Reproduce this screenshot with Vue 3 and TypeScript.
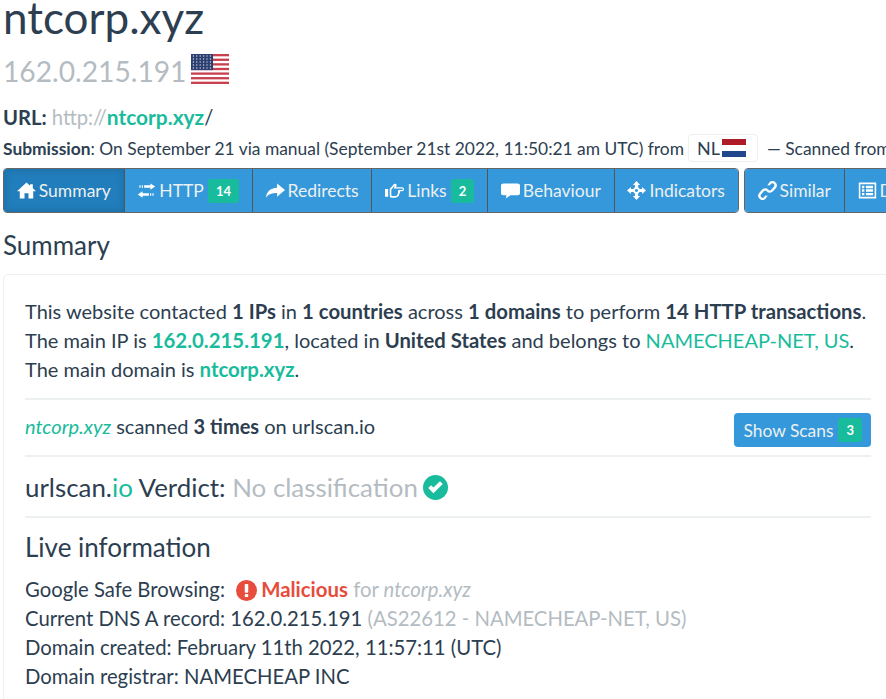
<template>
  <div class="page">
    <h1 class="title">ntcorp.xyz</h1>
    <h2 class="ip">
      <span>162.0.215.191</span>
      <svg class="us-flag" viewBox="0 0 38 29" width="38" height="30" preserveAspectRatio="none">
        <rect width="38" height="29" fill="#fff" />
        <rect v-for="n in 7" :key="n" x="0" :y="(n - 1) * 4.46" width="38" height="2.23" fill="#c8404f" />
        <rect width="22" height="15.6" fill="#2d3f70" />
        <g fill="#cfd6e8">
          <template v-for="r in 5" :key="r">
            <circle v-for="c in 6" :key="c" :cx="c * 3.4 - 1" :cy="r * 2.9 - 1" r="0.7" />
          </template>
        </g>
      </svg>
    </h2>
    <div class="url"><b>URL:</b> <span class="muted">http://</span><a class="domain">ntcorp.xyz</a><b class="slash">/</b></div>
    <div class="submission">
      <span><b>Submission</b>: On September 21 via manual (September 21st 2022, 11:50:21 am UTC) from</span>
      <span class="country">NL
        <svg viewBox="0 0 24 18" width="24" height="18">
          <rect width="24" height="6" fill="#ae1c28" />
          <rect y="6" width="24" height="6" fill="#fff" />
          <rect y="12" width="24" height="6" fill="#21468b" />
        </svg>
      </span>
      <span class="dash">— Scanned from</span>
    </div>

    <div class="tabs">
      <div class="tab-group">
        <div v-for="tab in mainTabs" :key="tab.label" class="tab" :class="{ active: tab.active }">
          <svg class="icon" viewBox="0 0 24 24" width="19" height="19" fill="#fff" fill-rule="evenodd"><path :d="tab.icon" /></svg>
          <span>{{ tab.label }}</span>
          <span v-if="tab.badge" class="badge">{{ tab.badge }}</span>
        </div>
      </div>
      <div class="tab-group">
        <div v-for="tab in otherTabs" :key="tab.label" class="tab">
          <svg class="icon" viewBox="0 0 24 24" width="19" height="19" fill="#fff" fill-rule="evenodd"><path :d="tab.icon" /></svg>
          <span>{{ tab.label }}</span>
        </div>
      </div>
    </div>

    <h3 class="section-title">Summary</h3>

    <div class="panel">
      <p class="intro">
        This website contacted <b>1 IPs</b> in <b>1 countries</b> across <b>1 domains</b> to perform <b>14 HTTP transactions</b>.<br />
        The main IP is <a class="domain">162.0.215.191</a>, located in <b>United States</b> and belongs to <a class="link">NAMECHEAP-NET, US</a>.<br />
        The main domain is <a class="domain">ntcorp.xyz</a>.
      </p>
      <div class="scan-row">
        <span class="scan-text"><a class="link"><i>ntcorp.xyz</i></a> scanned <b>3 times</b> on urlscan.io</span>
        <button class="scan-btn">Show Scans <span class="badge">3</span></button>
      </div>
      <div class="verdict">
        <span>urlscan.<span class="green">io</span> Verdict: <span class="muted">No classification</span></span>
        <svg viewBox="0 0 24 24" width="25" height="25"><circle cx="12" cy="12" r="12" fill="#18bc9c" /><path d="M5 12.500l5 5 9-8.800-2.700-2.700-6.300 6.100-2.300-2.300z" fill="#fff" /></svg>
      </div>
      <h3 class="live-title">Live information</h3>
      <div class="live">
        <div>
          Google Safe Browsing:
          <svg class="alert" viewBox="0 0 24 24" width="21" height="21"><circle cx="12" cy="12" r="12" fill="#e74c3c" /><rect x="10" y="4.500" width="4" height="10" rx="1" fill="#fff" /><rect x="10" y="16" width="4" height="3.500" rx="1" fill="#fff" /></svg>
          <b class="danger">Malicious</b> <span class="muted">for <i>ntcorp.xyz</i></span>
        </div>
        <div>Current DNS A record: 162.0.215.191 <span class="muted">(AS22612 - NAMECHEAP-NET, US)</span></div>
        <div>Domain created: February 11th 2022, 11:57:11 (UTC)</div>
        <div>Domain registrar: NAMECHEAP INC</div>
      </div>
    </div>
  </div>
</template>

<script setup lang="ts">
interface Tab {
  label: string;
  icon: string;
  badge?: string;
  active?: boolean;
}

const mainTabs: Tab[] = [
  { label: "Summary", active: true, icon: "M12 2L0 13h3.500v9h6v-6.500h5V22h6v-9H24l-4-3.700V4h-3.500v2z" },
  { label: "HTTP", badge: "14", icon: "M17 3l6 4-6 4V8.500H9v-3h8zM3 5.500h1.500v3H3zM6 5.500h1.500v3H6zM7 13v2.500h8v3H7V21l-6-4zM16.500 15.500H18v3h-1.500zM19.500 15.500H21v3h-1.500z" },
  { label: "Redirects", icon: "M14 3l10 8.500-10 8.500v-5C8 15 3 16 0 21c.5-7 5-12 14-12.500z" },
  { label: "Links", badge: "2", icon: "M0 10h4v10H0zM6 10L11 4Q12 3 13.500 3.500L14.500 4Q15 6 14 8H21.500A2.500 2.500 0 0 1 21.500 13H19Q19.500 15 18 16.500Q18 19 16 20Q15 21 13 21H8Q6 21 6 19zM8 11V18Q8 19 9 19H13Q15 19 15.500 17.500Q16.500 16 16.500 13.500Q17 12.500 16.500 11.500H21.500A1 1 0 0 0 21.500 9.500H11L12.500 5.500z" },
  { label: "Behaviour", icon: "M3 3h18c1.500 0 3 1 3 2.500v10c0 1.500-1.500 2.500-3 2.500h-9l-6 4 1-4H3c-1.500 0-3-1-3-2.500v-10C0 4 1.500 3 3 3z" },
  { label: "Indicators", icon: "M12 0l4.500 5H14v3.200a4 4 0 0 1 1.800 1.800H19V7.500l5 4.500-5 4.500V14h-3.200a4 4 0 0 1-1.800 1.800V19h2.500L12 24l-4.500-5H10v-3.200A4 4 0 0 1 8.200 14H5v2.500L0 12l5-4.500V10h3.200A4 4 0 0 1 10 8.200V5H7.500zM12 10a2 2 0 1 0 .01 0z" },
];

const otherTabs: Tab[] = [
  { label: "Similar", icon: "M14.500 1.500a5.500 5.500 0 0 1 8 7.500l-3.500 4a5.500 5.500 0 0 1-8 .3l2-2.200a2.500 2.500 0 0 0 3.700-.2l3.500-4a2.500 2.500 0 0 0-3.700-3.300l-1.800 2a7 7 0 0 0-3 0zM9.500 22.500a5.500 5.500 0 0 1-8-7.500l3.500-4a5.500 5.500 0 0 1 8-.3l-2 2.200a2.500 2.500 0 0 0-3.700.2l-3.500 4a2.500 2.500 0 0 0 3.700 3.300l1.800-2a7 7 0 0 0 3 0z" },
  { label: "DOM", icon: "M1 2h22v20H1zm2 2v16h18V4zm2 2h3v3H5zm5 0h9v3h-9zm-5 4.500h3v3H5zm5 0h9v3h-9zM5 15h3v3H5zm5 0h9v3h-9z" },
];
</script>

<style scoped>
.page {
  width: 886px;
  height: 699px;
  overflow: hidden;
  padding: 0 0 0 3px;
  box-sizing: border-box;
  font-family: Lato, "Liberation Sans", sans-serif;
  font-size: 20.2px;
  line-height: 29px;
  color: #2c3e50;
}

.title {
  margin: -11px 0 0;
  font-size: 44px;
  line-height: 56px;
  font-weight: 400;
}

.ip {
  margin: 8px 0 0;
  display: flex;
  align-items: center;
  gap: 5px;
  font-size: 28.2px;
  line-height: 36px;
  font-weight: 400;
  color: #b4bcc2;
}

.us-flag {
  margin-top: -4px;
}

.url {
  margin-top: 13px;
  white-space: nowrap;
}

.url .domain {
  font-size: 20.9px;
}

.slash {
  font-weight: 400;
}

.muted {
  color: #b4bcc2;
}

.domain {
  color: #18bc9c;
  font-weight: 700;
}

.link,
.green {
  color: #18bc9c;
}

.submission {
  display: flex;
  align-items: center;
  gap: 4px;
  margin-top: 1px;
  white-space: nowrap;
  font-size: 17.4px;
  height: 30px;
}

.country {
  display: inline-flex;
  align-items: center;
  gap: 2px;
  height: 28px;
  padding: 0 11px 0 8px;
  border: 1px solid #ecf0f1;
  border-radius: 4px;
  box-sizing: border-box;
  font-size: 18px;
}

.dash {
  margin-left: 5px;
}

.tabs {
  display: flex;
  gap: 5px;
  margin-top: 5px;
  width: 1000px;
  font-size: 17.5px;
}

.tab-group {
  display: flex;
  height: 45px;
  border: 1px solid #666;
  border-radius: 4px;
  overflow: hidden;
  box-sizing: border-box;
}

.tab {
  display: flex;
  align-items: center;
  gap: 3px;
  padding: 0 12.800px;
  background: #3498db;
  color: #ecf0f1;
  border-left: 1px solid #555;
  white-space: nowrap;
}

.tab:first-child {
  border-left: 0;
}

.tab.active {
  background: #217dbb;
  box-shadow: inset 0 0 8px rgba(0, 0, 0, 0.15);
}

.badge {
  display: inline-block;
  background: #18bc9c;
  color: #fff;
  font-size: 13px;
  font-weight: 700;
  line-height: 24px;
  padding: 0 8px;
  border-radius: 3px;
  margin-left: 1px;
}

.section-title {
  margin: 16px 0 13px;
  font-size: 26px;
  line-height: 32px;
  font-weight: 400;
}

.panel {
  border: 1px solid #ecf0f1;
  border-radius: 5px;
  padding: 22px 14px 40px 21px;
  width: 900px;
  box-sizing: border-box;
}

.intro {
  margin: 0 0 14px;
  white-space: nowrap;
  width: 846px;
  font-size: 20px;
}

.intro b {
  font-size: 20.3px;
}

.intro .domain {
  font-size: 20.4px;
}

.scan-row,
.verdict {
  width: 846px;
  box-sizing: border-box;
  border-top: 2px solid #ecf0f1;
}

.scan-row {
  display: flex;
  align-items: center;
  justify-content: space-between;
  height: 57px;
  padding-top: 5px;
  font-size: 20px;
}

.scan-text {
  margin-bottom: 8px;
}

.scan-btn {
  display: flex;
  align-items: center;
  gap: 4px;
  height: 34px;
  padding: 0 9px;
  background: #3498db;
  color: #ecf0f1;
  border: 0;
  border-radius: 4px;
  font: inherit;
  font-size: 17.4px;
}

.verdict {
  display: flex;
  align-items: center;
  gap: 5px;
  height: 63px;
  padding-top: 1px;
  font-size: 25.9px;
  border-bottom: 2px solid #ecf0f1;
}

.live-title {
  margin: 13px 0 12px;
  font-size: 26px;
  line-height: 32px;
  font-weight: 400;
}

.live {
  white-space: nowrap;
  font-size: 20.3px;
}

.alert {
  vertical-align: -4px;
  margin: 0 4px 0 6px;
}

.danger {
  color: #e74c3c;
  font-size: 20.4px;
}
</style>

<style>
html,
body {
  margin: 0;
  background: #fff;
  overflow: hidden;
}
</style>
